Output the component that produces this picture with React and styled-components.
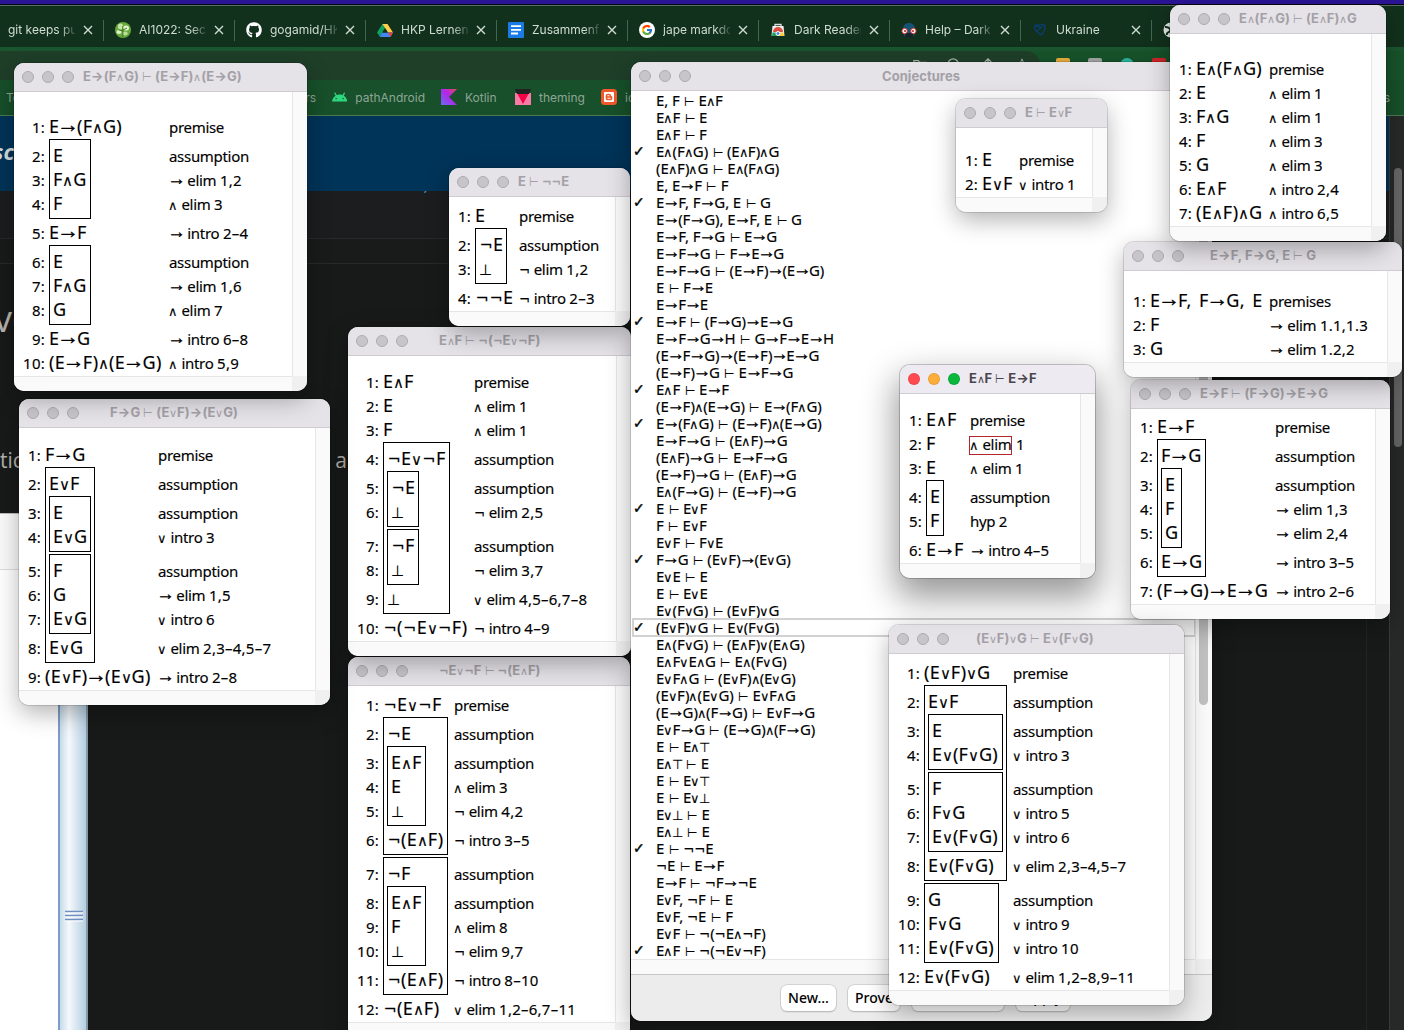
import React from 'react';
import styled, { createGlobalStyle, css } from 'styled-components';
import { FaGithub } from 'react-icons/fa';
import { FcGoogle } from 'react-icons/fc';
import { SiAndroid, SiBlogger } from 'react-icons/si';

const Global = createGlobalStyle`
  * { box-sizing: border-box; }
  body { margin: 0; background: #181a19; }
`;

const uiFont = `Inter, "Liberation Sans", sans-serif`;
const proofFont = `"Noto Sans", "Open Sans", "DejaVu Sans", sans-serif`;

/* ---------- desktop and browser behind the windows ---------- */

const Desktop = styled.div`
  position: relative;
  width: 1404px;
  height: 1030px;
  overflow: hidden;
  background: #181a19;
  font-family: ${uiFont};
`;

const Browser = styled.div`
  display: flex;
  flex-direction: column;
  height: 1030px;
`;

const Wallpaper = styled.div`
  height: 5px;
  background: #2a1496;
  border-bottom: 1px solid #0a0612;
`;

const TabStrip = styled.div`
  display: flex;
  height: 42px;
  padding-top: 14px;
  background: #12311d;
  border-top: 1px solid #56705f;
`;

const TabRow = styled.div`
  display: flex;
  margin-left: -27px;
`;

const Tab = styled.div`
  display: flex;
  flex: none;
  align-items: center;
  width: 131px;
  height: 21px;
  padding: 0 10px 0 11px;
  gap: 8px;
  border-right: 1px solid #41694f;
  color: #cfdcd2;
  font-size: 12px;
`;

const TabIcon = styled.span`
  display: flex;
  flex: none;
  width: 16px;
  height: 16px;
  color: #fff;
`;

const TabTitle = styled.span`
  flex: 1;
  height: 18px;
  line-height: 18px;
  overflow: hidden;
  white-space: nowrap;
  mask-image: linear-gradient(90deg, #000 78%, transparent 104%);
`;

const Close = styled.svg`
  flex: none;
  width: 10px;
  height: 10px;
  stroke: #cfdcd2;
  stroke-width: 1.4;
`;

const AddressRow = styled.div`
  display: flex;
  align-items: center;
  height: 33px;
  border-top: 4px solid #1b5630;
  background: #17532a;
`;

const AddressPill = styled.div`
  display: flex;
  align-items: center;
  justify-content: flex-end;
  gap: 20px;
  width: 1040px;
  height: 29px;
  padding-right: 11px;
  border-radius: 0 14px 14px 0;
  background: #1f3f29;
  color: #a9b8ad;
`;

const Extensions = styled.div`
  display: flex;
  gap: 18px;
  padding-left: 16px;
`;

const Extension = styled.span`
  width: 14px;
  height: 15px;
  border-radius: ${(p) => (p.$round ? '50%' : '2px')};
  background: ${(p) => p.$color};
`;

const Bookmarks = styled.div`
  display: flex;
  align-items: center;
  height: 37px;
  padding-left: 6px;
  border-bottom: 1px solid #4b7a4e;
  background: #17502a;
  color: #8fa596;
  font-size: 12px;
`;

const Folder = styled.span`
  display: flex;
  justify-content: space-between;
  width: 310px;
`;

const Bookmark = styled.span`
  display: flex;
  align-items: center;
  gap: 8px;
  width: ${(p) => p.$w}px;
  margin-left: 16px;
  white-space: nowrap;
`;

const FarRight = styled.span`
  margin-left: auto;
  padding-right: 14px;
`;

const Page = styled.div`
  display: grid;
  grid-template-columns: 1fr 15px;
  flex: 1;
`;

const PageBody = styled.div`
  display: flex;
  flex-direction: column;
  background: linear-gradient(90deg, transparent 1366px, #222524 1366px, #222524 1367px, transparent 1367px);
`;

const Hero = styled.div`
  flex: none;
  height: 75px;
  padding-top: 19px;
  margin-left: -6px;
  background: #003459;
  color: #d9dde0;
  font: italic bold 22px/32px "Open Sans", sans-serif;
`;

const HeroText = styled.span`
  margin-left: -1px;
`;

const CodeEdge = styled.div`
  flex: none;
  height: 7px;
  padding-left: 306px;
  overflow: hidden;
  background: #1c1d1f;
  color: #3d9ccc;
  font: italic 16.5px/6px "DejaVu Sans", sans-serif;
  white-space: nowrap;
`;

const CodeEdgeText = styled.span`
  display: block;
  margin-top: -8px;
`;

const Band = styled.div`
  flex: none;
  height: ${(p) => p.$h}px;
  border-bottom: ${(p) => (p.$line ? '1px solid #27292a' : '0')};
  background: ${(p) => p.$bg};
`;

const Heading = styled.div`
  flex: none;
  height: 183px;
  padding-top: 30px;
  margin-left: -6px;
  color: #b9b6b0;
  font: 36px/50px "Open Sans", sans-serif;
`;

const Paragraph = styled.div`
  flex: none;
  display: flex;
  justify-content: space-between;
  width: 347px;
  height: 66px;
  color: #b5b3ae;
  font: 21px/26px "Open Sans", sans-serif;
`;

const AppletRow = styled.div`
  display: flex;
  flex: 1;
`;

const Applet = styled.div`
  width: 58px;
  border-top: 1px solid #bbb;
  background: linear-gradient(#fafafa 55px, #ddd 55px, #ddd 56px, #fff 56px);
`;

const Splitter = styled.div`
  display: flex;
  justify-content: center;
  align-items: flex-start;
  width: 30px;
  height: 517px;
  padding: 397px 0 0 2px;
  border-left: 2px solid #7b9cc4;
  border-right: 2px solid #8698ab;
  background: linear-gradient(90deg, #c6daea, #f6f9fc 35%, #e0ebf4 55%, #b5cee0);
`;

const ScrollTrack = styled.div`
  padding: 52px 2px 0 4px;
  border-left: 1px solid #393b3b;
  background: #272929;
`;

const ScrollThumb = styled.div`
  height: 279px;
  border-radius: 4px;
  background: #666;
`;

/* ---------- application windows ---------- */

const Frame = styled.section`
  position: absolute;
  left: ${(p) => p.$x}px;
  top: ${(p) => p.$y}px;
  display: flex;
  flex-direction: column;
  width: ${(p) => p.$w}px;
  height: ${(p) => p.$h}px;
  border-radius: 10px;
  overflow: hidden;
  background: #fff;
  box-shadow: ${(p) =>
    p.$active
      ? '0 0 0 1px rgba(0,0,0,.2), 0 16px 34px 4px rgba(0,0,0,.4)'
      : '0 0 0 1px rgba(0,0,0,.13), 0 8px 24px rgba(0,0,0,.3)'};
`;

const TitleBar = styled.header`
  display: flex;
  flex: none;
  align-items: center;
  height: 29px;
  padding: 0 0 0 8px;
  border-bottom: 1px solid #cfccd1;
  background: ${(p) => (p.$active ? '#eeeaf1' : '#e5e2e8')};
`;

const Lights = styled.div`
  display: flex;
  gap: 8px;
`;

const Light = styled.span`
  width: 12px;
  height: 12px;
  border-radius: 50%;
  border: 1px solid ${(p) => (p.$color ? 'rgba(0,0,0,.08)' : '#aeabb0')};
  background: ${(p) => p.$color || '#c8c5ca'};
`;

const Viewport = styled.div`
  display: grid;
  flex: 1;
  grid-template-columns: 1fr 15px;
  grid-template-rows: 1fr 15px;
  min-height: 0;
`;

const VGutter = styled.div`
  border-left: 1px solid #e6e6e6;
  background: #fafafa;
`;
const HGutter = styled.div`
  border-top: 1px solid #e6e6e6;
  background: #fafafa;
`;
const Corner = styled.div`
  background: #f0f0f0;
`;

const Sheet = styled.div`
  display: grid;
  grid-template-columns: ${(p) => p.$num}px ${(p) => p.$formula}px 1fr;
  padding-top: ${(p) => p.$pad}px;
  min-width: 0;
  overflow: hidden;
  color: #000;
  font-family: ${proofFont};
  -webkit-text-stroke: 0.15px #000;
  white-space: nowrap;
`;

const Column = styled.div`
  display: flex;
  flex-direction: column;
  align-items: ${(p) => (p.$end ? 'flex-end' : 'flex-start')};
  padding-right: ${(p) => (p.$end ? 4 : 0)}px;
  min-width: 0;
`;

const Cell = styled.div`
  flex: none;
  height: 24px;
  margin-top: ${(p) => p.$gap}px;
  font-size: 15px;
  line-height: 22px;
  letter-spacing: -0.3px;
`;

const Refs = styled.span`
  letter-spacing: 0.25px;
`;

const Box = styled.div`
  display: flex;
  flex: none;
  flex-direction: column;
  align-items: flex-start;
  width: ${(p) => p.$w}px;
  margin: -1px 0 3px;
  padding: 5px 0 1px 3px;
  border: 1px solid #000;
`;

const Marked = styled.span`
  display: inline-block;
  height: 19px;
  margin-left: -1px;
  line-height: 15px;
  border: 1px solid #b3262b;
`;

const symbolShape = {
  '→': css`width: 0.98em; line-height: 0; font-family: "Liberation Sans"; > i { position: relative; top: -0.03em; margin: 0 -0.2em; font-size: 1.22em; -webkit-text-stroke: 0.4px currentColor; }`,
  '∧': css`width: 0.59em; > i { font-size: 0.84em; font-weight: 200; }`,
  '∨': css`width: 0.59em; > i { font-size: 0.84em; font-weight: 200; }`,
  '¬': css`width: 0.74em; > i { font-size: 0.88em; }`,
  '⊥': css`width: 0.68em; > i { font-size: 0.84em; font-weight: 200; }`,
  '⊤': css`width: 0.62em; > i { font-size: 0.84em; font-weight: 200; }`,
  '⊢': css`width: 0.75em; > i { font-size: 0.82em; font-weight: 200; }`,
};

const Symbol = styled.span`
  display: inline-flex;
  justify-content: center;
  align-items: baseline;
  font-family: "DejaVu Sans";
  font-weight: normal;
  letter-spacing: 0;
  > i { font-style: normal; }
  ${(p) => symbolShape[p.$s]}
`;

const Line = styled.div`
  flex: none;
  height: 24px;
  font-size: 18px;
  line-height: 21px;
  letter-spacing: 0.3px;
  word-spacing: 2.4px;
  ${Symbol}[data-s='¬'] { width: 0.78em; }
`;

const Title = styled.h1`
  margin: 0 0 0 ${(p) => p.$lead}px;
  color: ${(p) => (p.$active ? '#49464c' : '#a3a0a6')};
  font: bold 13px/20px ${uiFont};
  letter-spacing: 0.05px;
  white-space: nowrap;
  ${Symbol}[data-s='→'] { font-family: Inter; font-weight: bold; }
  ${Symbol}[data-s='→'] > i { top: 0; margin: 0; font-size: 1em; -webkit-text-stroke: 0; }
  ${Symbol}[data-s='¬'] > i { font-weight: bold; }
`;

function Text({ children }) {
  return children.split(/([→∧∨¬⊥⊤⊢])/).map((part, i) =>
    symbolShape[part] ? (
      <Symbol key={i} $s={part} data-s={part}><i>{part}</i></Symbol>
    ) : (
      part
    )
  );
}

// A step is [formula, reason]; a box is { w, steps }.
function flatten(steps, out = { rows: [], gap: 0 }) {
  steps.forEach((s) => {
    if (Array.isArray(s)) {
      out.rows.push({ reason: s[1], marked: s[2], gap: out.gap });
      out.gap = 0;
    } else {
      out.gap += 5;
      flatten(s.steps, out);
      out.gap += 5;
    }
  });
  return out;
}

function Steps({ steps }) {
  return steps.map((s, i) =>
    Array.isArray(s) ? (
      <Line key={i}><Text>{s[0]}</Text></Line>
    ) : (
      <Box key={i} $w={s.w}><Steps steps={s.steps} /></Box>
    )
  );
}

function Reason({ children }) {
  const [rule, refs] = children.split(/([\d.,–]+)$/);
  return (
    <>
      <Text>{rule}</Text>
      {refs && <Refs>{refs}</Refs>}
    </>
  );
}

function Window({ x, y, w, h, title, lead, active, children }) {
  const colors = active ? ['#ff4b4f', '#fdae3a', '#0bb83c'] : [null, null, null];
  return (
    <Frame $x={x} $y={y} $w={w} $h={h} $active={active}>
      <TitleBar $active={active}>
        <Lights>{colors.map((c, i) => <Light key={i} $color={c} />)}</Lights>
        <Title $lead={lead} $active={active}><Text>{title}</Text></Title>
      </TitleBar>
      {children}
    </Frame>
  );
}

function ProofWindow({ pad, num, formula, steps, ...frame }) {
  const { rows } = flatten(steps);
  return (
    <Window {...frame}>
      <Viewport>
        <Sheet $pad={pad} $num={num} $formula={formula}>
          <Column $end>
            {rows.map((r, i) => <Cell key={i} $gap={r.gap}><Refs>{i + 1}:</Refs></Cell>)}
          </Column>
          <Column><Steps steps={steps} /></Column>
          <Column>
            {rows.map((r, i) => (
              <Cell key={i} $gap={r.gap}>
                {r.marked && <Marked><Text>{r.marked}</Text></Marked>}
                <Reason>{r.reason}</Reason>
              </Cell>
            ))}
          </Column>
        </Sheet>
        <VGutter />
        <HGutter />
        <Corner />
      </Viewport>
    </Window>
  );
}

const A = 'assumption';
const P = 'premise';

const backProofs = [
  {
    x: 348, y: 657, w: 282, h: 380, title: '¬E∨¬F ⊢ ¬(E∧F)', lead: 31, pad: 8, num: 35, formula: 71,
    steps: [
      ['¬E∨¬F', P],
      { w: 65, steps: [['¬E', A], { w: 39, steps: [['E∧F', A], ['E', '∧ elim 3'], ['⊥', '¬ elim 4,2']] }, ['¬(E∧F)', '¬ intro 3–5']] },
      { w: 65, steps: [['¬F', A], { w: 39, steps: [['E∧F', A], ['F', '∧ elim 8'], ['⊥', '¬ elim 9,7']] }, ['¬(E∧F)', '¬ intro 8–10']] },
      ['¬(E∧F)', '∨ elim 1,2–6,7–11'],
    ],
  },
  {
    x: 348, y: 327, w: 283, h: 329, title: 'E∧F ⊢ ¬(¬E∨¬F)', lead: 31, pad: 15, num: 35, formula: 91,
    steps: [
      ['E∧F', P], ['E', '∧ elim 1'], ['F', '∧ elim 1'],
      {
        w: 67, steps: [
          ['¬E∨¬F', A],
          { w: 32, steps: [['¬E', A], ['⊥', '¬ elim 2,5']] },
          { w: 32, steps: [['¬F', A], ['⊥', '¬ elim 3,7']] },
          ['⊥', '∨ elim 4,5–6,7–8'],
        ],
      },
      ['¬(¬E∨¬F)', '¬ intro 4–9'],
    ],
  },
  {
    x: 449, y: 168, w: 181, h: 158, title: 'E ⊢ ¬¬E', lead: 9, pad: 8, num: 26, formula: 44,
    steps: [['E', P], { w: 32, steps: [['¬E', A], ['⊥', '¬ elim 1,2']] }, ['¬¬E', '¬ intro 2–3']],
  },
  {
    x: 19, y: 399, w: 311, h: 306, title: 'F→G ⊢ (E∨F)→(E∨G)', lead: 31, pad: 16, num: 26, formula: 113,
    steps: [
      ['F→G', P],
      {
        w: 50, steps: [
          ['E∨F', A],
          { w: 42, steps: [['E', A], ['E∨G', '∨ intro 3']] },
          { w: 42, steps: [['F', A], ['G', '→ elim 1,5'], ['E∨G', '∨ intro 6']] },
          ['E∨G', '∨ elim 2,3–4,5–7'],
        ],
      },
      ['(E∨F)→(E∨G)', '→ intro 2–8'],
    ],
  },
  {
    x: 14, y: 63, w: 293, h: 328, title: 'E→(F∧G) ⊢ (E→F)∧(E→G)', lead: 9, pad: 24, num: 35, formula: 120,
    steps: [
      ['E→(F∧G)', P],
      { w: 42, steps: [['E', A], ['F∧G', '→ elim 1,2'], ['F', '∧ elim 3']] },
      ['E→F', '→ intro 2–4'],
      { w: 42, steps: [['E', A], ['F∧G', '→ elim 1,6'], ['G', '∧ elim 7']] },
      ['E→G', '→ intro 6–8'],
      ['(E→F)∧(E→G)', '∧ intro 5,9'],
    ],
  },
];

const frontProofs = [
  {
    x: 1131, y: 380, w: 259, h: 239, title: 'E→F ⊢ (F→G)→E→G', lead: 9, pad: 7, num: 26, formula: 118,
    steps: [
      ['E→F', P],
      { w: 49, steps: [['F→G', A], { w: 21, steps: [['E', A], ['F', '→ elim 1,3'], ['G', '→ elim 2,4']] }, ['E→G', '→ intro 3–5']] },
      ['(F→G)→E→G', '→ intro 2–6'],
    ],
  },
  {
    x: 1124, y: 242, w: 278, h: 135, title: 'E→F, F→G, E ⊢ G', lead: 26, pad: 19, num: 26, formula: 119,
    steps: [['E→F, F→G, E', 'premises'], ['F', '→ elim 1.1,1.3'], ['G', '→ elim 1.2,2']],
  },
  {
    x: 1170, y: 5, w: 216, h: 236, title: 'E∧(F∧G) ⊢ (E∧F)∧G', lead: 9, pad: 24, num: 26, formula: 73,
    steps: [
      ['E∧(F∧G)', P], ['E', '∧ elim 1'], ['F∧G', '∧ elim 1'], ['F', '∧ elim 3'],
      ['G', '∧ elim 3'], ['E∧F', '∧ intro 2,4'], ['(E∧F)∧G', '∧ intro 6,5'],
    ],
  },
  {
    x: 956, y: 99, w: 151, h: 113, title: 'E ⊢ E∨F', lead: 9, pad: 21, num: 26, formula: 37,
    steps: [['E', P], ['E∨F', '∨ intro 1']],
  },
  {
    x: 889, y: 625, w: 295, h: 380, title: '(E∨F)∨G ⊢ E∨(F∨G)', lead: 27, pad: 8, num: 35, formula: 89,
    steps: [
      ['(E∨F)∨G', P],
      {
        w: 83, steps: [
          ['E∨F', A],
          { w: 75, steps: [['E', A], ['E∨(F∨G)', '∨ intro 3']] },
          { w: 75, steps: [['F', A], ['F∨G', '∨ intro 5'], ['E∨(F∨G)', '∨ intro 6']] },
          ['E∨(F∨G)', '∨ elim 2,3–4,5–7'],
        ],
      },
      { w: 75, steps: [['G', A], ['F∨G', '∨ intro 9'], ['E∨(F∨G)', '∨ intro 10']] },
      ['E∨(F∨G)', '∨ elim 1,2–8,9–11'],
    ],
  },
  {
    x: 900, y: 365, w: 195, h: 213, title: 'E∧F ⊢ E→F', lead: 9, active: true, pad: 15, num: 26, formula: 44,
    steps: [
      ['E∧F', P], ['F', ' 1', '∧ elim'], ['E', '∧ elim 1'],
      { w: 18, steps: [['E', A], ['F', 'hyp 2']] },
      ['E→F', '→ intro 4–5'],
    ],
  },
];

/* ---------- conjectures panel ---------- */

const conjectures = `E, F ⊢ E∧F
E∧F ⊢ E
E∧F ⊢ F
*E∧(F∧G) ⊢ (E∧F)∧G
(E∧F)∧G ⊢ E∧(F∧G)
E, E→F ⊢ F
*E→F, F→G, E ⊢ G
E→(F→G), E→F, E ⊢ G
E→F, F→G ⊢ E→G
E→F→G ⊢ F→E→G
E→F→G ⊢ (E→F)→(E→G)
E ⊢ F→E
E→F→E
*E→F ⊢ (F→G)→E→G
E→F→G→H ⊢ G→F→E→H
(E→F→G)→(E→F)→E→G
(E→F)→G ⊢ E→F→G
*E∧F ⊢ E→F
(E→F)∧(E→G) ⊢ E→(F∧G)
*E→(F∧G) ⊢ (E→F)∧(E→G)
E→F→G ⊢ (E∧F)→G
(E∧F)→G ⊢ E→F→G
(E→F)→G ⊢ (E∧F)→G
E∧(F→G) ⊢ (E→F)→G
*E ⊢ E∨F
F ⊢ E∨F
E∨F ⊢ F∨E
*F→G ⊢ (E∨F)→(E∨G)
E∨E ⊢ E
E ⊢ E∨E
E∨(F∨G) ⊢ (E∨F)∨G
*(E∨F)∨G ⊢ E∨(F∨G)
E∧(F∨G) ⊢ (E∧F)∨(E∧G)
E∧F∨E∧G ⊢ E∧(F∨G)
E∨F∧G ⊢ (E∨F)∧(E∨G)
(E∨F)∧(E∨G) ⊢ E∨F∧G
(E→G)∧(F→G) ⊢ E∨F→G
E∨F→G ⊢ (E→G)∧(F→G)
E ⊢ E∧⊤
E∧⊤ ⊢ E
E ⊢ E∨⊤
E ⊢ E∨⊥
E∨⊥ ⊢ E
E∧⊥ ⊢ E
*E ⊢ ¬¬E
¬E ⊢ E→F
E→F ⊢ ¬F→¬E
E∨F, ¬F ⊢ E
E∨F, ¬E ⊢ F
E∨F ⊢ ¬(¬E∧¬F)
*E∧F ⊢ ¬(¬E∨¬F)`.split('\n');

const ListViewport = styled.div`
  display: grid;
  grid-template-columns: 1fr 17px;
  grid-template-rows: 868px 15px;
  border-bottom: 1px solid #c6c6c6;
`;

const List = styled.ul`
  margin: 0;
  padding: 1px 0 0 2px;
  list-style: none;
  font: 15px/17px ${proofFont};
  letter-spacing: -0.1px;
  -webkit-text-stroke: 0.15px #000;
  ${Symbol}[data-s='→'] { width: 0.93em; }
  ${Symbol}[data-s='∧'], ${Symbol}[data-s='∨'] { width: 0.55em; }
`;

const ListItem = styled.li`
  display: grid;
  grid-template-columns: 23px 1fr;
  height: 17px;
  line-height: 17px;
  white-space: nowrap;
  outline: ${(p) => (p.$selected ? '2px solid #d2d2d2' : '0')};
  outline-offset: -1px;
`;

const Check = styled.span`
  font: bold 14px/17px "DejaVu Sans";
  -webkit-text-stroke: 0.4px #000;
`;

const ListScroll = styled.div`
  padding: 0 4px 0 3px;
  border-left: 1px solid #e6e6e6;
  background: #fafafa;
`;

const ListThumb = styled.div`
  height: 614px;
  border-radius: 0 0 5px 5px;
  background: #c1c1c1;
`;

const Footer = styled.footer`
  display: flex;
  flex: 1;
  gap: 12px;
  padding: 10px 0 0 150px;
  background: #ececec;
`;

const Button = styled.button`
  width: ${(p) => p.$w}px;
  height: 26px;
  padding: 0;
  border: 0;
  border-radius: 6px;
  background: #fff;
  box-shadow: 0 0 0 0.5px #bbb, 0 1px 1.5px rgba(0, 0, 0, 0.25);
  color: #000;
  font: 500 14px/22px ${proofFont};
  letter-spacing: 0;
`;

function Conjectures() {
  return (
    <Window x={631} y={62} w={581} h={959} title="Conjectures" lead={191}>
      <ListViewport>
        <List>
          {conjectures.map((c, i) => (
            <ListItem key={i} $selected={i === 31}>
              <Check>{c[0] === '*' ? '✓' : ''}</Check>
              <span><Text>{c.replace('*', '')}</Text></span>
            </ListItem>
          ))}
        </List>
        <ListScroll><ListThumb /></ListScroll>
        <HGutter />
        <Corner />
      </ListViewport>
      <Footer>
        <Button $w={55}>New...</Button>
        <Button $w={52}>Prove</Button>
        <Button $w={92}>Show Proof</Button>
        <Button $w={54}>Apply</Button>
      </Footer>
    </Window>
  );
}

/* ---------- tab and bookmark icons ---------- */

const Svg = ({ children, w = 16, h = 16, box = '0 0 16 16' }) => (
  <svg width={w} height={h} viewBox={box} fill="none">{children}</svg>
);

const Campus = () => (
  <Svg>
    <circle cx="8" cy="8" r="8" fill="#69a83e" />
    <ellipse cx="5.5" cy="4.6" rx="2.6" ry="3" fill="#c4e6a2" />
    <ellipse cx="11" cy="6" rx="3" ry="2.6" fill="#e3f4cf" />
    <ellipse cx="4" cy="10" rx="2.6" ry="1.9" fill="#ddf1c8" />
    <ellipse cx="10" cy="11.6" rx="2.7" ry="2" fill="#b8dd94" />
    <path d="M7.8 4v11M7.8 9 4 8M8 8l4-2" stroke="#3d7b22" />
  </Svg>
);
const Github = () => (
  <Svg><circle cx="8" cy="8" r="7.6" fill="#12311d" /><FaGithub size={16} color="#fff" /></Svg>
);
const Drive = () => (
  <Svg>
    <path d="M5.5 2h5L5.2 11 2.6 14.5 0 10.6z" fill="#11a15f" />
    <path d="M5.5 2h5L16 10.6h-5z" fill="#ffcf48" />
    <path d="M5 10.6h11L13.4 15H2.6z" fill="#4285f4" />
    <path d="M11 10.6h5L13.4 15z" fill="#ea4335" />
    <path d="M8 6.2 5.3 10.6h5.4z" fill="#12311d" />
  </Svg>
);
const Docs = () => (
  <Svg>
    <rect width="16" height="16" rx="1" fill="#1a7be6" />
    <path d="M3 4.2h10M3 7.8h10M3 11.5h7" stroke="#fff" strokeWidth="1.8" />
  </Svg>
);
const GoogleIcon = () => (
  <Svg><circle cx="8" cy="8" r="8" fill="#fff" /><g transform="translate(2 2)"><FcGoogle size={12} /></g></Svg>
);
const Store = () => (
  <Svg>
    <path d="M5 4.500V2.500h6v2" stroke="#ddd" strokeWidth="1.300" />
    <path d="M2.500 4h11L14.500 14H1.500z" fill="#f1f1f1" />
    <path d="M3 10a5 5 0 0 1 10 0z" fill="#dd4b3e" />
    <path d="M2.500 10.500H6L8 14H2z" fill="#1d9c5a" />
    <path d="M13.500 10.500H10L8 14h6z" fill="#fccd3d" />
    <circle cx="8" cy="11.500" r="2" fill="#4787ee" stroke="#fff" />
  </Svg>
);
const Reader = () => (
  <Svg>
    <path d="M2 7c0-8 12-8 12 0l-1 7H3z" fill="#155273" />
    <path d="M4 11h8v4H4z" fill="#17222b" />
    <circle cx="3.600" cy="9" r="2.700" fill="#fff" stroke="#d6322b" />
    <circle cx="12.400" cy="9" r="2.700" fill="#fff" stroke="#d6322b" />
    <circle cx="4" cy="9" r="1" fill="#a32220" />
    <circle cx="12" cy="9" r="1" fill="#a32220" />
  </Svg>
);
const Heart = () => (
  <Svg>
    <path d="M9 13 4 9C1 5 3 1.500 7 3.500 10 1 14 3 13 6c0 3-2 5-4 7M2 3l7 3M5 9l6-5" stroke="#0b3d72" strokeWidth="1.300" />
  </Svg>
);
const Globe = () => (
  <Svg><circle cx="8" cy="8" r="7.500" fill="#e8ece9" /><path d="M2 5c4 0 6 2 5 4s-4 1-3 4M9 1c-1 3 4 3 5 5" stroke="#12311d" strokeWidth="2" /></Svg>
);
const Kotlin = () => (
  <Svg>
    <defs>
      <linearGradient id="kt" x1="0" y1="16" x2="16" y2="0" gradientUnits="userSpaceOnUse">
        <stop stopColor="#6b6cf0" /><stop offset=".55" stopColor="#b125ea" /><stop offset="1" stopColor="#e54857" />
      </linearGradient>
    </defs>
    <path d="M0 0h16L8 8l8 8H0z" fill="url(#kt)" />
  </Svg>
);
const Theming = () => (
  <Svg><path d="M0 4h16v12H0z" fill="#f77ba7" /><path d="M2 4h12L8 15z" fill="#f40047" /><path d="M0 0h16l-2 5H2z" fill="#222" /></Svg>
);
const Blogger = () => (
  <Svg><rect width="16" height="16" rx="3.500" fill="#f0592b" /><g transform="translate(3 3)"><SiBlogger size={10} color="#fff" /></g></Svg>
);
const Grip = () => (
  <Svg w={18} h={12} box="0 0 18 12">
    <path d="M0 2.500h18M0 6.500h18M0 10.500h18" stroke="#fff" strokeWidth="2" />
    <path d="M0 1.500h18M0 5.500h18M0 9.500h18" stroke="#6f8fc0" strokeWidth="1.300" />
  </Svg>
);

const tabs = [
  [null, 'git keeps pushing'], [Campus, 'AI1022: Sections'], [Github, 'gogamid/HKP'], [Drive, 'HKP Lernen –'],
  [Docs, 'Zusammenfas'], [GoogleIcon, 'jape markdown'], [Store, 'Dark Reader –'], [Reader, 'Help – Dark R'],
  [Heart, 'Ukraine'], [Globe, ''],
];

export default function App() {
  return (
    <Desktop>
      <Global />
      <Browser>
        <Wallpaper />
        <TabStrip>
          <TabRow>
            {tabs.map(([Icon, label], i) => (
              <Tab key={i}>
                <TabIcon>{Icon && <Icon />}</TabIcon>
                <TabTitle>{label}</TabTitle>
                <Close viewBox="0 0 10 10"><path d="M1 1l8 8M9 1l-8 8" /></Close>
              </Tab>
            ))}
          </TabRow>
        </TabStrip>
        <AddressRow>
          <AddressPill>
            <Svg w={14} h={14}><path d="M1 3h5l2 2h7v9H1z" stroke="currentColor" strokeWidth="1.500" /></Svg>
            <Svg w={14} h={14}><circle cx="7" cy="7" r="6" stroke="currentColor" strokeWidth="1.500" /></Svg>
            <Svg w={14} h={14}><path d="M8 12V1M4 5l4-4 4 4" stroke="currentColor" strokeWidth="1.500" /></Svg>
            <Svg w={14} h={14}><path d="M8 1l2 5h5l-4 3 2 6-5-4-5 4 2-6-4-3h5z" stroke="currentColor" /></Svg>
          </AddressPill>
          <Extensions>
            <Extension $color="#e8ae3d" />
            <Extension $color="#a3a8a5" />
            <Extension $color="#2bb6a1" $round />
            <Extension $color="#d9262b" />
          </Extensions>
        </AddressRow>
        <Bookmarks>
          <Folder><span>To</span><span>rs</span></Folder>
          <Bookmark $w={93}><SiAndroid size={16} color="#2ed77f" />pathAndroid</Bookmark>
          <Bookmark $w={58}><Kotlin />Kotlin</Bookmark>
          <Bookmark $w={70}><Theming />theming</Bookmark>
          <Bookmark $w={40}><Blogger />ic</Bookmark>
          <FarRight>s</FarRight>
        </Bookmarks>
        <Page>
          <PageBody>
            <Hero><HeroText>sc</HeroText></Hero>
            <CodeEdge><CodeEdgeText>THOUSELFELZ, 1</CodeEdgeText></CodeEdge>
            <Band $h={41} $bg="#1c1d1f" $line />
            <Band $h={25} $bg="#191b1a" $line />
            <Heading>vo</Heading>
            <Paragraph><span>tic</span><span>a</span></Paragraph>
            <AppletRow>
              <Applet />
              <Splitter><Grip /></Splitter>
            </AppletRow>
          </PageBody>
          <ScrollTrack><ScrollThumb /></ScrollTrack>
        </Page>
      </Browser>

      {backProofs.map((p) => <ProofWindow key={p.title} {...p} />)}
      <Conjectures />
      {frontProofs.map((p) => <ProofWindow key={p.title} {...p} />)}
    </Desktop>
  );
}
